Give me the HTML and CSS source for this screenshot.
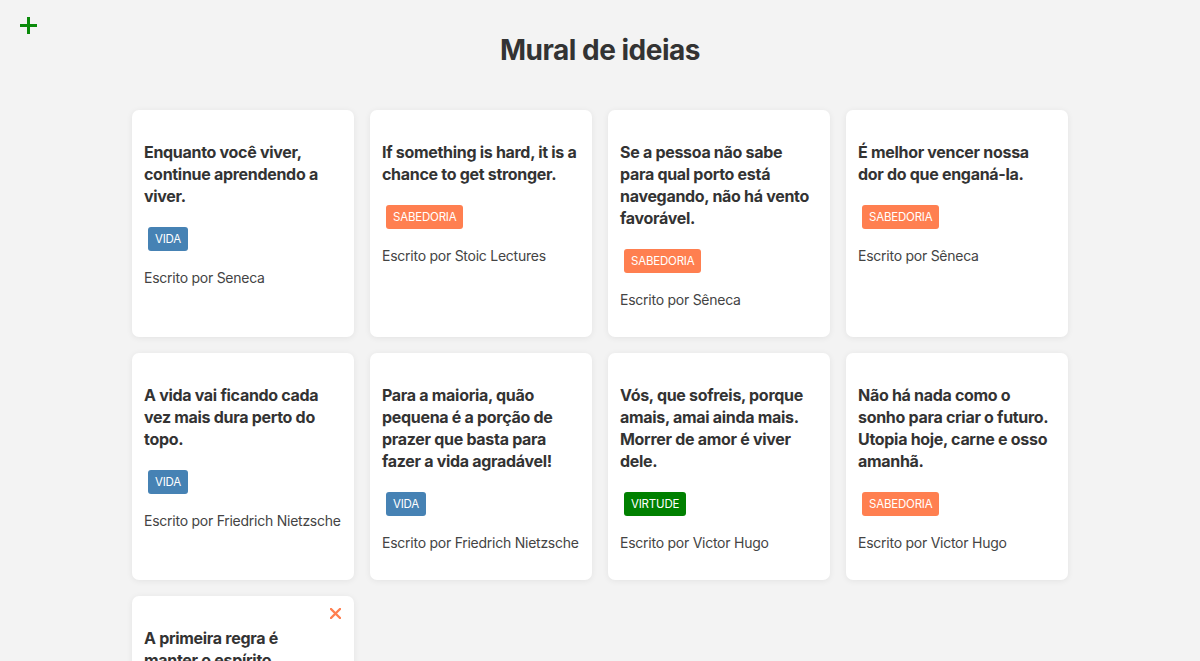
FILE: index.html
```html
<!DOCTYPE html>
<html lang="pt-BR">
<head>
<meta charset="utf-8">
<title>Mural de ideias</title>
<link rel="stylesheet" href="styles.css">
</head>
<body>
<button class="add-btn" aria-label="Adicionar">
  <svg width="17" height="17" viewBox="0 0 17 17"><path d="M8.5 0v17M0 8.5h17" stroke="#0a8a0a" stroke-width="3"/></svg>
</button>
<main class="page">
  <h1 class="title">Mural de ideias</h1>
  <section class="grid">
    <article class="card">
      <div class="card-top"><button class="close" aria-label="Remover"><svg width="11" height="11" viewBox="0 0 11 11"><path d="M1 1l9 9M10 1l-9 9" stroke="#ff7f50" stroke-width="2.4" stroke-linecap="round"/></svg></button></div>
      <p class="quote">Enquanto você viver, continue aprendendo a viver.</p>
      <div class="tags"><span class="tag tag-vida">VIDA</span></div>
      <p class="author">Escrito por Seneca</p>
    </article>
    <article class="card">
      <div class="card-top"><button class="close" aria-label="Remover"><svg width="11" height="11" viewBox="0 0 11 11"><path d="M1 1l9 9M10 1l-9 9" stroke="#ff7f50" stroke-width="2.4" stroke-linecap="round"/></svg></button></div>
      <p class="quote">If something is hard, it is a chance to get stronger.</p>
      <div class="tags"><span class="tag tag-sabedoria">SABEDORIA</span></div>
      <p class="author">Escrito por Stoic Lectures</p>
    </article>
    <article class="card">
      <div class="card-top"><button class="close" aria-label="Remover"><svg width="11" height="11" viewBox="0 0 11 11"><path d="M1 1l9 9M10 1l-9 9" stroke="#ff7f50" stroke-width="2.4" stroke-linecap="round"/></svg></button></div>
      <p class="quote">Se a pessoa não sabe para qual porto está navegando, não há vento favorável.</p>
      <div class="tags"><span class="tag tag-sabedoria">SABEDORIA</span></div>
      <p class="author">Escrito por Sêneca</p>
    </article>
    <article class="card">
      <div class="card-top"><button class="close" aria-label="Remover"><svg width="11" height="11" viewBox="0 0 11 11"><path d="M1 1l9 9M10 1l-9 9" stroke="#ff7f50" stroke-width="2.4" stroke-linecap="round"/></svg></button></div>
      <p class="quote">É melhor vencer nossa dor do que enganá-la.</p>
      <div class="tags"><span class="tag tag-sabedoria">SABEDORIA</span></div>
      <p class="author">Escrito por Sêneca</p>
    </article>
    <article class="card">
      <div class="card-top"><button class="close" aria-label="Remover"><svg width="11" height="11" viewBox="0 0 11 11"><path d="M1 1l9 9M10 1l-9 9" stroke="#ff7f50" stroke-width="2.4" stroke-linecap="round"/></svg></button></div>
      <p class="quote">A vida vai ficando cada vez mais dura perto do topo.</p>
      <div class="tags"><span class="tag tag-vida">VIDA</span></div>
      <p class="author">Escrito por Friedrich Nietzsche</p>
    </article>
    <article class="card">
      <div class="card-top"><button class="close" aria-label="Remover"><svg width="11" height="11" viewBox="0 0 11 11"><path d="M1 1l9 9M10 1l-9 9" stroke="#ff7f50" stroke-width="2.4" stroke-linecap="round"/></svg></button></div>
      <p class="quote">Para a maioria, quão pequena é a porção de prazer que basta para fazer a vida agradável!</p>
      <div class="tags"><span class="tag tag-vida">VIDA</span></div>
      <p class="author">Escrito por Friedrich Nietzsche</p>
    </article>
    <article class="card">
      <div class="card-top"><button class="close" aria-label="Remover"><svg width="11" height="11" viewBox="0 0 11 11"><path d="M1 1l9 9M10 1l-9 9" stroke="#ff7f50" stroke-width="2.4" stroke-linecap="round"/></svg></button></div>
      <p class="quote">Vós, que sofreis, porque amais, amai ainda mais. Morrer de amor é viver dele.</p>
      <div class="tags"><span class="tag tag-virtude">VIRTUDE</span></div>
      <p class="author">Escrito por Victor Hugo</p>
    </article>
    <article class="card">
      <div class="card-top"><button class="close" aria-label="Remover"><svg width="11" height="11" viewBox="0 0 11 11"><path d="M1 1l9 9M10 1l-9 9" stroke="#ff7f50" stroke-width="2.4" stroke-linecap="round"/></svg></button></div>
      <p class="quote">Não há nada como o sonho para criar o futuro. Utopia hoje, carne e osso amanhã.</p>
      <div class="tags"><span class="tag tag-sabedoria">SABEDORIA</span></div>
      <p class="author">Escrito por Victor Hugo</p>
    </article>
    <article class="card card-hover">
      <div class="card-top"><button class="close" aria-label="Remover"><svg width="11" height="11" viewBox="0 0 11 11"><path d="M1 1l9 9M10 1l-9 9" stroke="#ff7f50" stroke-width="2.4" stroke-linecap="round"/></svg></button></div>
      <p class="quote">A primeira regra é manter&nbsp;o espírito tranquilo.</p>
      <div class="tags"><span class="tag tag-sabedoria">SABEDORIA</span></div>
      <p class="author">Escrito por Sêneca</p>
    </article>
  </section>
</main>
</body>
</html>
```
FILE: styles.css
```css
* { box-sizing: border-box; }
html, body { margin: 0; padding: 0; }
body {
  background: #f3f3f3;
  font-family: "Inter", "Noto Sans", "Liberation Sans", sans-serif;
  color: #333;
}
.add-btn {
  position: absolute;
  top: 17px;
  left: 20px;
  width: 17px;
  height: 17px;
  padding: 0;
  border: 0;
  background: transparent;
  cursor: pointer;
  line-height: 0;
}
.page {
  padding-top: 29px;
  padding-bottom: 40px;
}
.title {
  margin: 0 0 39px;
  text-align: center;
  font-size: 28px;
  line-height: 42px;
  font-weight: 700;
  letter-spacing: -0.5px;
  color: #333;
}
.grid {
  width: 936px;
  margin: 0 auto;
  display: grid;
  grid-template-columns: repeat(4, 222px);
  gap: 16px;
}
.card {
  background: #fff;
  border-radius: 7px;
  box-shadow: 0 1px 6px rgba(0, 0, 0, 0.07);
  padding: 12px 12px 27px;
}
.card-top {
  display: flex;
  justify-content: flex-end;
  height: 19px;
}
.close {
  visibility: hidden;
  border: 0;
  background: transparent;
  padding: 0;
  width: 11px;
  height: 11px;
  margin-right: 1px;
  line-height: 0;
  cursor: pointer;
}
.card-hover .close { visibility: visible; }
.quote {
  margin: 0;
  font-size: 16px;
  line-height: 22px;
  font-weight: 700;
  letter-spacing: -0.3px;
  color: #333;
}
.tags {
  margin-top: 16px;
  display: flex;
}
.tag {
  margin: 4px;
  padding: 0 7px;
  height: 24px;
  line-height: 24px;
  border-radius: 3px;
  font-size: 11.5px;
  letter-spacing: -0.2px;
  color: #fff;
}
.tag-vida { background: #4682b4; }
.tag-sabedoria { background: #ff7f50; }
.tag-virtude { background: #008000; }
.author {
  margin: 12px 0 0;
  font-size: 14px;
  line-height: 21px;
  letter-spacing: -0.25px;
  color: #444;
}
```
